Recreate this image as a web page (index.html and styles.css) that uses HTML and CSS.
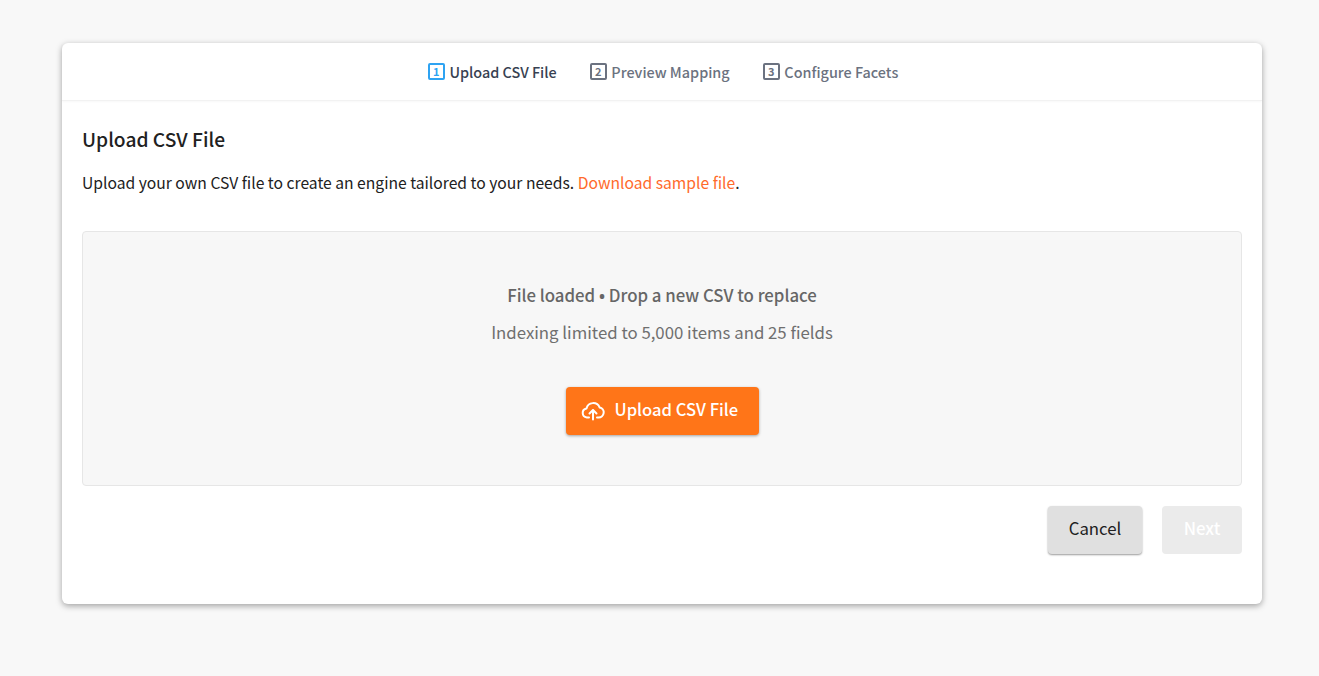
FILE: index.html
```html
<!DOCTYPE html>
<html lang="en">
<head>
  <meta charset="UTF-8">
  <meta name="viewport" content="width=device-width, initial-scale=1.0">
  <title>Upload CSV File</title>
  <link rel="stylesheet" href="styles.css">
</head>
<body>
  <div class="card">
    <div class="steps">
      <div class="step active"><span class="step-num">1</span>Upload CSV File</div>
      <div class="step"><span class="step-num">2</span>Preview Mapping</div>
      <div class="step"><span class="step-num">3</span>Configure Facets</div>
    </div>
    <div class="card-body">
      <h2>Upload CSV File</h2>
      <p class="intro">Upload your own CSV file to create an engine tailored to your needs. <a href="#">Download sample file</a>.</p>
      <div class="dropzone">
        <div class="drop-title">File loaded <span class="dot">•</span> Drop a new CSV to replace</div>
        <div class="drop-note">Indexing limited to 5,000 items and 25 fields</div>
        <button class="upload-btn">
          <svg width="24" height="24" viewBox="0 0 24 24" fill="none" stroke="#fff" stroke-width="2" stroke-linecap="round" stroke-linejoin="round">
            <path d="M8 19.500H5.800a4.600 4.600 0 0 1-.3-9.100A6.900 6.900 0 0 1 18.600 9.400a5.100 5.100 0 0 1-1.100 10.100H16"/>
            <path d="M12 21.500v-9"/>
            <path d="M8.500 15.500 12 12l3.500 3.500"/>
          </svg>
          Upload CSV File
        </button>
      </div>
      <div class="actions">
        <button class="btn-cancel">Cancel</button>
        <button class="btn-next" disabled>Next</button>
      </div>
    </div>
  </div>
</body>
</html>
```

FILE: styles.css
```css
body {
  margin: 0;
  padding: 43px 57px 72px 62px;
  background: #f8f8f8;
  font-family: "Noto Sans CJK SC", "Noto Sans", sans-serif;
  color: #212121;
}
.card {
  height: 561px;
  box-sizing: border-box;
  background: #fff;
  border-radius: 6px;
  box-shadow: 0 2px 6px rgba(0,0,0,0.35);
}
.steps {
  height: 58px;
  box-sizing: border-box;
  display: flex;
  justify-content: center;
  align-items: center;
  gap: 33px;
  padding-left: 2px;
  border-bottom: 1px solid #f2f2f2;
  box-shadow: 0 1px 2px rgba(0,0,0,0.03);
}
.step {
  display: flex;
  align-items: center;
  font-size: 14.4px;
  font-weight: 500;
  line-height: 20px;
  color: #6b7280;
}
.step.active {
  color: #374151;
}
.step-num {
  width: 13px;
  height: 13px;
  margin-right: 4.7px;
  border: 2px solid #6b7280;
  border-radius: 2px;
  font-size: 11px;
  font-weight: 700;
  line-height: 13px;
  text-align: center;
}
.step.active .step-num {
  border-color: #2ea3f2;
  color: #2ea3f2;
}
.card-body {
  padding: 24px 20px 0;
}
h2 {
  margin: 0;
  font-size: 19.2px;
  font-weight: 500;
  line-height: 28px;
  color: #212121;
}
.intro {
  margin: 18px 0 0;
  font-size: 15.67px;
  line-height: 24px;
  color: #212121;
}
.intro a {
  color: #ff6a2b;
  text-decoration: none;
}
.dropzone {
  height: 255px;
  box-sizing: border-box;
  margin-top: 36px;
  padding-top: 50px;
  display: flex;
  flex-direction: column;
  align-items: center;
  background: #f7f7f7;
  border: 1px solid #e6e6e6;
  border-radius: 4px;
}
.drop-title {
  font-size: 16.8px;
  font-weight: 500;
  line-height: 26px;
  color: #666;
}
.dot {
  font-family: "Noto Sans", sans-serif;
  font-size: 16px;
  font-weight: 700;
}
.drop-note {
  margin-top: 10px;
  font-size: 16.8px;
  line-height: 26px;
  color: #6f6f6f;
}
.upload-btn {
  margin-top: 42px;
  width: 193px;
  height: 48px;
  padding: 0 0 4px 15px;
  display: flex;
  align-items: center;
  gap: 10px;
  border: none;
  border-radius: 4px;
  background: #ff7518;
  color: #fff;
  font-family: inherit;
  font-size: 16.6px;
  font-weight: 500;
  box-shadow: 0 1px 3px rgba(0,0,0,0.35);
}
.upload-btn svg {
  margin-top: 2px;
}
.actions {
  display: flex;
  justify-content: flex-end;
  gap: 20px;
  margin-top: 20px;
}
.actions button {
  height: 48px;
  padding: 0 0 4px;
  border: none;
  border-radius: 4px;
  font-family: inherit;
  font-size: 16.8px;
}
.btn-cancel {
  width: 94px;
  background: #e0e0e0;
  color: #212121;
  box-shadow: 0 1px 2px rgba(0,0,0,0.4);
}
.btn-next {
  width: 80px;
  background: #ebebeb;
  color: #fff;
  font-weight: 500;
}
```
